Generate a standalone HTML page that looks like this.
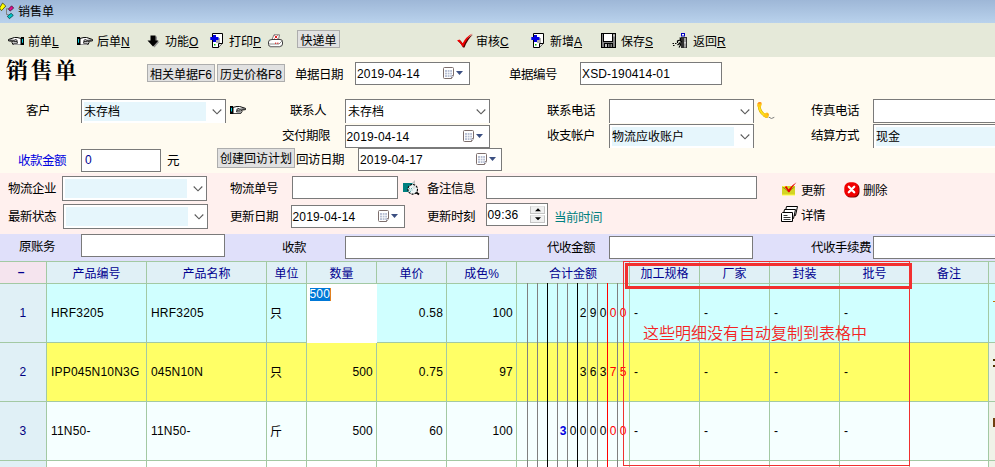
<!DOCTYPE html>
<html lang="zh-CN">
<head>
<meta charset="utf-8">
<title>销售单</title>
<style>
html,body{margin:0;padding:0;}
body{width:995px;height:467px;overflow:hidden;position:relative;background:#fffbf0;
 font-family:"Liberation Sans","Noto Sans CJK SC",sans-serif;font-size:12px;color:#000;}
.a{position:absolute;white-space:nowrap;line-height:14px;}
.lb{position:absolute;white-space:nowrap;line-height:14px;font-size:12.5px;letter-spacing:-0.5px;margin-top:1px;}
.in{position:absolute;box-sizing:border-box;border:1px solid #7a7a7a;background:#fff;font-size:12px;line-height:14px;white-space:nowrap;overflow:hidden;}
.in span.t{position:absolute;left:1px;top:4px;letter-spacing:0.15px;}
.cb{position:absolute;box-sizing:border-box;border:1px solid #7a7a7a;border-bottom:none;background:#fff;font-size:12px;}
.cb .f{position:absolute;left:2px;top:2px;bottom:2px;right:19px;background:#e6f6fc;}
.cb .t{position:absolute;left:2px;top:5px;line-height:14px;white-space:nowrap;}
.cb svg{position:absolute;right:5px;top:9px;}
.btn{position:absolute;box-sizing:border-box;border:1px solid #adadad;background:#e1e1e1;font-size:12px;padding-top:3px;line-height:14px !important;text-align:center;white-space:nowrap;}
.bar{position:absolute;left:0;width:995px;}
u{text-decoration:underline;}
.hd{position:absolute;top:264px;height:21px;line-height:21px;text-align:center;color:#000090;font-size:12px;white-space:nowrap;}
.vl{position:absolute;top:261px;width:1px;height:206px;background:#a3c9a3;}
.hl{position:absolute;height:1px;background:#a3c9a3;}
.c{position:absolute;line-height:14px;font-size:12px;white-space:nowrap;letter-spacing:0.2px;}
.r{text-align:right;}
.lg{position:absolute;top:283px;width:1px;height:184px;}
.dg{position:absolute;width:10px;text-align:center;font-size:12px;line-height:14px;}
</style>
</head>
<body>
<!-- backgrounds -->
<div class="bar" id="title" style="top:0;height:23px;background:linear-gradient(180deg,#9eb7d7,#b9d2ec);"></div>
<div class="bar" id="tool" style="top:23px;height:34px;background:#e5e9d9;"></div>
<div class="bar" style="top:57px;height:116px;background:#fffbf0;"></div>
<div class="bar" style="top:173px;height:61px;background:#fff0ee;"></div>
<div class="bar" style="top:234px;height:27px;background:#e0e0fa;"></div>

<!-- title bar -->
<svg class="a" style="left:0;top:0" width="17" height="21" viewBox="0 0 17 21"><path d="M6.500 8.500 V14.500 H8.500 M6.500 8.800 H8.500" stroke="#808080" fill="none"/><path d="M2.600 3 L5.800 6 L1.500 10.700 L-0.500 8 Z" fill="#ffff00" stroke="#303000" stroke-width=".7"/><path d="M11.600 5.800 L13.700 8.100 L10.100 11.100 L8.400 9 Z" fill="#e0108c" stroke="#300020" stroke-width=".7"/><path d="M11.100 13.300 L13.300 15.400 L9.400 18.700 L7.300 16.300 Z" fill="#00c8c8" stroke="#003030" stroke-width=".7"/></svg>
<div class="a" style="left:18px;top:5px;">销售单</div>

<!-- toolbar -->
<div class="a" style="left:28px;top:35px;">前单<u>L</u></div>
<div class="a" style="left:97px;top:35px;">后单<u>N</u></div>
<div class="a" style="left:165px;top:35px;">功能<u>O</u></div>
<div class="a" style="left:229px;top:35px;">打印<u>P</u></div>
<div class="btn" style="left:297px;top:30px;width:43px;height:18px;line-height:16px;">快递单</div>
<div class="a" style="left:476px;top:35px;">审核<u>C</u></div>
<div class="a" style="left:550px;top:35px;">新增<u>A</u></div>
<div class="a" style="left:621px;top:35px;">保存<u>S</u></div>
<div class="a" style="left:693px;top:35px;">返回<u>R</u></div>

<!-- heading row -->
<div class="a" style="left:6px;top:57px;font-family:'Liberation Serif','Noto Serif CJK SC',serif;font-weight:bold;font-size:22px;line-height:28px;letter-spacing:2.4px;">销售单</div>
<div class="btn" style="left:147px;top:64px;width:68px;height:18px;line-height:16px;">相关单据F6</div>
<div class="btn" style="left:217px;top:64px;width:68px;height:18px;line-height:16px;">历史价格F8</div>
<div class="lb" style="left:295px;top:67px;">单据日期</div>
<div class="in" style="left:355px;top:62px;width:115px;height:23px;"><span class="t">2019-04-14</span></div>
<div class="lb" style="left:509px;top:67px;">单据编号</div>
<div class="in" style="left:580px;top:62px;width:142px;height:23px;"><span class="t">XSD-190414-01</span></div>

<!-- row: customer -->
<div class="lb" style="left:26px;top:103px;">客户</div>
<div class="cb" style="left:81px;top:99px;width:145px;height:24px;"><div class="f"></div><span class="t">未存档</span></div>
<div class="lb" style="left:290px;top:103px;">联系人</div>
<div class="cb" style="left:345px;top:99px;width:145px;height:24px;"><span class="t">未存档</span></div>
<div class="lb" style="left:547px;top:103px;">联系电话</div>
<div class="cb" style="left:609px;top:99px;width:145px;height:24px;"></div>
<div class="lb" style="left:811px;top:103px;">传真电话</div>
<div class="in" style="left:873px;top:99px;width:140px;height:24px;"></div>

<div class="lb" style="left:282px;top:128px;">交付期限</div>
<div class="in" style="left:345px;top:125px;width:145px;height:23px;"><span class="t" style="left:.5px">2019-04-14</span></div>
<div class="lb" style="left:547px;top:128px;">收支帐户</div>
<div class="cb" style="left:609px;top:124px;width:145px;height:24px;"><div class="f"></div><span class="t">物流应收账户</span></div>
<div class="lb" style="left:811px;top:128px;">结算方式</div>
<div class="cb" style="left:873px;top:124px;width:145px;height:24px;"><div class="f"></div><span class="t">现金</span></div>

<div class="lb" style="left:18px;top:153px;color:#0000e0;">收款金额</div>
<div class="in" style="left:81px;top:149px;width:80px;height:23px;"><span class="t" style="color:#000090;left:3px;top:3px">0</span></div>
<div class="lb" style="left:167px;top:153px;">元</div>
<div class="btn" style="left:217px;top:148px;width:78px;height:20px;line-height:17px;">创建回访计划</div>
<div class="lb" style="left:296px;top:152px;">回访日期</div>
<div class="in" style="left:358px;top:148px;width:144px;height:23px;"><span class="t">2019-04-17</span></div>

<!-- pink area -->
<div class="lb" style="left:8px;top:181px;">物流企业</div>
<div class="cb" style="left:62px;top:176px;width:145px;height:25px;border-bottom:1px solid #7a7a7a;"><div class="f" style="bottom:2px"></div></div>
<div class="lb" style="left:230px;top:181px;">物流单号</div>
<div class="in" style="left:292px;top:176px;width:106px;height:23px;"></div>
<div class="lb" style="left:427px;top:181px;">备注信息</div>
<div class="in" style="left:486px;top:176px;width:271px;height:23px;"></div>
<div class="lb" style="left:801px;top:183px;">更新</div>
<div class="lb" style="left:863px;top:183px;">删除</div>

<div class="lb" style="left:8px;top:209px;">最新状态</div>
<div class="cb" style="left:63px;top:204px;width:145px;height:25px;border-bottom:1px solid #7a7a7a;"><div class="f" style="bottom:2px"></div></div>
<div class="lb" style="left:230px;top:209px;">更新日期</div>
<div class="in" style="left:291px;top:205px;width:114px;height:23px;"><span class="t" style="left:.5px">2019-04-14</span></div>
<div class="lb" style="left:427px;top:209px;">更新时刻</div>
<div class="in" style="left:486px;top:203px;width:62px;height:23px;"><span class="t" style="left:.5px">09:36</span></div>
<div class="lb" style="left:554px;top:210px;color:#008080;">当前时间</div>
<div class="lb" style="left:801px;top:208px;">详情</div>

<!-- lavender -->
<div class="lb" style="left:19px;top:239px;">原账务</div>
<div class="in" style="left:81px;top:234px;width:144px;height:23px;"></div>
<div class="lb" style="left:282px;top:240px;">收款</div>
<div class="in" style="left:345px;top:236px;width:144px;height:23px;"></div>
<div class="lb" style="left:547px;top:240px;">代收金额</div>
<div class="in" style="left:609px;top:236px;width:144px;height:23px;"></div>
<div class="lb" style="left:811px;top:240px;">代收手续费</div>
<div class="in" style="left:873px;top:236px;width:140px;height:23px;"></div>

<svg class="a" style="left:8px;top:36.700px" width="16" height="8.600" viewBox="0 0 16 9" preserveAspectRatio="none"><g transform="translate(16,0) scale(-1,1)"><rect x="0" y="0" width="3" height="9" fill="#000"/><rect x="1" y="2" width="1" height="4" fill="#00d0e0"/><path d="M3 1.5 L7 0.5 L9.5 0.5 L15.5 2.6 L15.5 4 L11.5 4.5 L12 6 L10.5 8.5 L3 8.5 Z" fill="#fff" stroke="#000" stroke-width="1"/><path d="M7.5 2.5 L10 3.5 L14.5 3.2 M7 4.6 L10.8 4.6 M7 6.5 L10.8 6.5 M7.2 3 L6.5 6.8" fill="none" stroke="#000" stroke-width=".9"/></g></svg>
<svg class="a" style="left:77px;top:36.700px" width="16" height="8.600" viewBox="0 0 16 9" preserveAspectRatio="none"><g><rect x="0" y="0" width="3" height="9" fill="#000"/><rect x="1" y="2" width="1" height="4" fill="#00d0e0"/><path d="M3 1.5 L7 0.5 L9.5 0.5 L15.5 2.6 L15.5 4 L11.5 4.5 L12 6 L10.5 8.5 L3 8.5 Z" fill="#fff" stroke="#000" stroke-width="1"/><path d="M7.5 2.5 L10 3.5 L14.5 3.2 M7 4.6 L10.8 4.6 M7 6.5 L10.8 6.5 M7.2 3 L6.5 6.8" fill="none" stroke="#000" stroke-width=".9"/></g></svg>
<svg class="a" style="left:147px;top:35px" width="13" height="13" viewBox="0 0 13 13"><path d="M5 1.5 H10 V6.5 H12.5 L7.5 12.5 L2.5 6.5 H5 Z" fill="#909090"/><path d="M3.5 0.5 H8.5 V5.5 H11.5 L6 11.5 L0.5 5.5 H3.5 Z" fill="#000"/></svg>
<svg class="a" style="left:210px;top:33px" width="14" height="15" viewBox="0 0 14 15"><path d="M2.5 0.5 H12.5 V10.5 L8.5 14.5 H2.5 Z" fill="#fff" stroke="#000" stroke-width="1"/><path d="M12.5 10.5 H8.5 V14.5" fill="#e0e0e0" stroke="#000" stroke-width="1"/><rect x="6" y="5" width="4" height="5" fill="#b0b0b0"/><path d="M3 2 H6 V4 H8.5 V7 H6 V9 H3 V7 H0.3 V4 H3 Z" fill="#0000e0"/><rect x="4" y="11" width="1.5" height="1.5" fill="#00c000"/></svg>
<svg class="a" style="left:531px;top:33px" width="14" height="15" viewBox="0 0 14 15"><path d="M2.5 0.5 H12.5 V10.5 L8.5 14.5 H2.5 Z" fill="#fff" stroke="#000" stroke-width="1"/><path d="M12.5 10.5 H8.5 V14.5" fill="#e0e0e0" stroke="#000" stroke-width="1"/><rect x="6" y="5" width="4" height="5" fill="#b0b0b0"/><path d="M3 2 H6 V4 H8.5 V7 H6 V9 H3 V7 H0.3 V4 H3 Z" fill="#0000e0"/><rect x="4" y="11" width="1.5" height="1.5" fill="#00c000"/></svg>
<svg class="a" style="left:267px;top:34px" width="17" height="14" viewBox="0 0 17 14"><path d="M5 5.5 L7 0.8 H12.5 L11.5 5.5 Z" fill="#fff" stroke="#606060" stroke-width=".8"/><path d="M7.5 1.5 L10.5 4.5 M10.5 1.5 L7.5 4.5" stroke="#e02020" stroke-width="1"/><path d="M1.5 8 Q1.5 5.5 5 5.5 H13 Q15.5 5.5 15.5 7.5 V10 Q15.500 12.5 12.5 12.5 H4 Q1.5 12.5 1.5 10.5 Z" fill="#fff" stroke="#404040" stroke-width="1"/><path d="M2 10 H12 L15 7" fill="none" stroke="#707070" stroke-width=".8"/><path d="M3 12.8 H13" stroke="#909090" stroke-width="1.2"/><rect x="8" y="8.6" width="1.2" height="1.2" fill="#e02020"/><rect x="10.2" y="8.6" width="1.2" height="1.2" fill="#e02020"/></svg>
<svg class="a" style="left:456px;top:33px" width="18" height="15" viewBox="0 0 18 15"><path d="M2 8 L4.5 7.5 L7.5 11.5 Q11 4.500 17 1.500 Q11.500 6.500 8.500 14.500 L7 14.500 Q5 10.500 2 8 Z" fill="#500000"/><path d="M1 7.500 L3.500 6.500 L6.500 10.500 Q10 3.500 16.500 0.500 Q10.500 5.500 7.500 13.500 L6.500 13.500 Q4.500 9.500 1 7.500 Z" fill="#f00000"/></svg>
<svg class="a" style="left:601px;top:33px" width="15" height="15" viewBox="0 0 15 15"><rect x="0.500" y="0.500" width="14" height="14" fill="#808080" stroke="#000"/><rect x="2.500" y="0.500" width="9" height="8" fill="#fff" stroke="#000"/><rect x="12.500" y="1.500" width="1" height="2" fill="#fff"/><rect x="3" y="10" width="9" height="4.500" fill="#000"/><rect x="4" y="11" width="2" height="3" fill="#c0c0c0"/><rect x="7" y="11" width="1.500" height="3" fill="#808080"/><rect x="9.500" y="11" width="1.500" height="3" fill="#808080"/></svg>
<svg class="a" style="left:672px;top:33px" width="16" height="15" viewBox="0 0 16 15"><rect x="9.500" y="0.500" width="3" height="2.500" fill="#fff" stroke="#0000c0" stroke-width="1"/><rect x="9" y="4" width="6" height="11" fill="#303030"/><rect x="12" y="5" width="2" height="9.500" fill="#a0a0a0"/><rect x="12.500" y="9" width="1" height="1.500" fill="#fff"/><path d="M7.500 5 L8.500 5 L8.500 8 L10 9 M8 7 L5.500 8 L5.500 10 M8 9 L8.500 12 L7 14.500 M8 10 L5.500 12" stroke="#000" stroke-width="1.2" fill="none"/><path d="M0.500 10.500 H2 M3 10.500 H4.500 M1 12.500 H2.500" stroke="#000" stroke-width="1"/></svg>
<svg class="a" style="left:230px;top:105.700px" width="16" height="8.200" viewBox="0 0 16 9" preserveAspectRatio="none"><g><rect x="0" y="0" width="3" height="9" fill="#000"/><rect x="1" y="2" width="1" height="4" fill="#00d0e0"/><path d="M3 1.5 L7 0.5 L9.5 0.5 L15.5 2.6 L15.5 4 L11.5 4.5 L12 6 L10.5 8.5 L3 8.5 Z" fill="#fff" stroke="#000" stroke-width="1"/><path d="M7.5 2.5 L10 3.5 L14.5 3.2 M7 4.6 L10.8 4.6 M7 6.5 L10.8 6.5 M7.2 3 L6.5 6.8" fill="none" stroke="#000" stroke-width=".9"/></g></svg>
<svg class="a" style="left:212px;top:109px" width="10" height="6" viewBox="0 0 10 6"><path d="M0.7 0.5 L5 4.8 L9.3 0.5" fill="none" stroke="#5a5a5a" stroke-width="1.1"/></svg>
<svg class="a" style="left:476px;top:109px" width="10" height="6" viewBox="0 0 10 6"><path d="M0.7 0.5 L5 4.8 L9.3 0.5" fill="none" stroke="#5a5a5a" stroke-width="1.1"/></svg>
<svg class="a" style="left:740px;top:109px" width="10" height="6" viewBox="0 0 10 6"><path d="M0.7 0.5 L5 4.8 L9.3 0.5" fill="none" stroke="#5a5a5a" stroke-width="1.1"/></svg>
<svg class="a" style="left:740px;top:134px" width="10" height="6" viewBox="0 0 10 6"><path d="M0.7 0.5 L5 4.8 L9.3 0.5" fill="none" stroke="#5a5a5a" stroke-width="1.1"/></svg>
<svg class="a" style="left:193px;top:186px" width="10" height="6" viewBox="0 0 10 6"><path d="M0.7 0.5 L5 4.8 L9.3 0.5" fill="none" stroke="#5a5a5a" stroke-width="1.1"/></svg>
<svg class="a" style="left:194px;top:214px" width="10" height="6" viewBox="0 0 10 6"><path d="M0.7 0.5 L5 4.8 L9.3 0.5" fill="none" stroke="#5a5a5a" stroke-width="1.1"/></svg>
<svg class="a" style="left:443px;top:67px" width="21" height="13" viewBox="0 0 21 13"><path d="M1.5 0.5 H9.5 Q10.5 0.5 10.5 1.5 V8.5 L8.5 11.5 H1.5 Q0.5 11.5 0.5 10.5 V1.5 Q0.5 0.5 1.5 0.5 Z" fill="#fff" stroke="#7d6e6c" stroke-width="1"/><path d="M10.5 8.5 H8.5 V11.5" fill="#d8dce8" stroke="#7d6e6c" stroke-width=".8"/><rect x="2" y="3" width="7" height="7" fill="#b8c0d4"/><path d="M4.5 3 V10 M6.8 3 V10 M2 5.4 H9 M2 7.7 H9" stroke="#fff" stroke-width=".7"/><path d="M13 4 H20 L16.5 8 Z" fill="#3b4f81"/></svg>
<svg class="a" style="left:463px;top:130px" width="21" height="13" viewBox="0 0 21 13"><path d="M1.5 0.5 H9.5 Q10.5 0.5 10.5 1.5 V8.5 L8.5 11.5 H1.5 Q0.5 11.5 0.5 10.5 V1.5 Q0.5 0.5 1.5 0.5 Z" fill="#fff" stroke="#7d6e6c" stroke-width="1"/><path d="M10.5 8.5 H8.5 V11.5" fill="#d8dce8" stroke="#7d6e6c" stroke-width=".8"/><rect x="2" y="3" width="7" height="7" fill="#b8c0d4"/><path d="M4.5 3 V10 M6.8 3 V10 M2 5.4 H9 M2 7.7 H9" stroke="#fff" stroke-width=".7"/><path d="M13 4 H20 L16.5 8 Z" fill="#3b4f81"/></svg>
<svg class="a" style="left:476px;top:153px" width="21" height="13" viewBox="0 0 21 13"><path d="M1.5 0.5 H9.5 Q10.5 0.5 10.5 1.5 V8.5 L8.5 11.5 H1.5 Q0.5 11.5 0.5 10.5 V1.5 Q0.5 0.5 1.5 0.5 Z" fill="#fff" stroke="#7d6e6c" stroke-width="1"/><path d="M10.5 8.5 H8.5 V11.5" fill="#d8dce8" stroke="#7d6e6c" stroke-width=".8"/><rect x="2" y="3" width="7" height="7" fill="#b8c0d4"/><path d="M4.5 3 V10 M6.8 3 V10 M2 5.4 H9 M2 7.7 H9" stroke="#fff" stroke-width=".7"/><path d="M13 4 H20 L16.5 8 Z" fill="#3b4f81"/></svg>
<svg class="a" style="left:378px;top:210px" width="21" height="13" viewBox="0 0 21 13"><path d="M1.5 0.5 H9.5 Q10.5 0.5 10.5 1.5 V8.5 L8.5 11.5 H1.5 Q0.5 11.5 0.5 10.5 V1.5 Q0.5 0.5 1.5 0.5 Z" fill="#fff" stroke="#7d6e6c" stroke-width="1"/><path d="M10.5 8.5 H8.5 V11.5" fill="#d8dce8" stroke="#7d6e6c" stroke-width=".8"/><rect x="2" y="3" width="7" height="7" fill="#b8c0d4"/><path d="M4.5 3 V10 M6.8 3 V10 M2 5.4 H9 M2 7.7 H9" stroke="#fff" stroke-width=".7"/><path d="M13 4 H20 L16.5 8 Z" fill="#3b4f81"/></svg>
<div class="a" style="left:530px;top:205.500px;width:15px;height:8px;background:#f0f0f0;border:1px solid #c4c4c4;border-top-color:#e4e4e4;box-sizing:border-box;"></div><div class="a" style="left:530px;top:215px;width:15px;height:8px;background:#f0f0f0;border:1px solid #c4c4c4;border-top-color:#e4e4e4;box-sizing:border-box;"></div><svg class="a" style="left:534.500px;top:208px" width="6" height="13" viewBox="0 0 6 13"><path d="M0 3.300 L3 0.300 L6 3.300 Z M0 9.200 L3 12.200 L6 9.200 Z" fill="#000"/></svg>
<svg class="a" style="left:756px;top:100px" width="20" height="21" viewBox="0 0 20 21"><path d="M12.500 17 Q15.500 19.800 18.300 17.300" stroke="#707070" stroke-width=".9" fill="none"/><path d="M3.200 5.500 Q3.200 12.500 10.500 16.500" stroke="#d8a800" stroke-width="3" fill="none" stroke-linecap="round"/><path d="M3.200 5.500 Q3.200 12.500 10.500 16.500" stroke="#ffe41c" stroke-width="1.900" fill="none" stroke-linecap="round"/><path d="M1.300 5.500 Q0.800 2.500 3.500 2 Q5.800 1.800 5.800 4.200 L4.800 7 L1.800 7 Z" fill="#ffc814"/><path d="M1.500 4 Q2 2 4 2 Q5.600 2 5.600 3.500 Z" fill="#ff8c28"/><path d="M8.500 13.500 L11 12.600 Q13.500 13.500 12.800 15.800 Q12 18 9.500 17.600 L7.800 16 Z" fill="#ffc814"/><path d="M11 13 Q13 13.800 12.600 15.600 L11.200 15 Z" fill="#ff9c28"/></svg>
<svg class="a" style="left:402px;top:179px" width="18" height="17" viewBox="0 0 18 17"><path d="M10 4 L13 1 V5 Z" fill="#c0c0c0"/><rect x="1" y="4" width="9.500" height="9" fill="#008080"/><circle cx="10.700" cy="10.300" r="4.800" fill="#eef6f6" stroke="#000" stroke-width="1.100" stroke-dasharray="2.200 1"/><path d="M7 9.500 H10 M7.500 11 H10.500 M8 12.500 H10" stroke="#40a0a0" stroke-width=".8" stroke-dasharray="1 1"/><path d="M10.500 8 L12.500 10 M11.500 7 L13.500 9" stroke="#c0c0c0" stroke-width=".7"/><path d="M14.300 13.500 L17 15.500" stroke="#000" stroke-width="1.800"/></svg>
<svg class="a" style="left:781px;top:182px" width="16" height="14" viewBox="0 0 16 14"><rect x="1" y="4" width="13" height="9" fill="#d4d424"/><path d="M1 4.500 H6 M1 13 H14" stroke="#ffff40" stroke-width="1"/><path d="M1.500 5 L7.500 9.500 L13.500 5" fill="none" stroke="#909010" stroke-width=".9"/><path d="M3.500 5 L5.500 4 L7.500 7.500 Q11 3 15.500 0.300 Q11 5 8.500 10.300 L7.300 10.300 Q6 7 3.500 5 Z" fill="#e80000"/></svg>
<svg class="a" style="left:844px;top:182px" width="16" height="16" viewBox="0 0 16 16"><rect x="1.200" y="1.200" width="14.300" height="14.300" rx="5.500" fill="#700000"/><rect x="0.300" y="0.300" width="14.400" height="14.400" rx="5.500" fill="#f00000"/><path d="M4.800 4.800 L10.200 10.200 M10.200 4.800 L4.800 10.200" stroke="#fff" stroke-width="2.300" stroke-linecap="round"/></svg>
<svg class="a" style="left:781px;top:206px" width="17" height="16" viewBox="0 0 17 16"><path d="M5.500 0.500 H16.500 L14.500 9.500 H3.500 Z" fill="#fff" stroke="#000" stroke-width="1"/><path d="M3.500 3.500 H14.500 L12.500 12.500 H1.500 Z" fill="#fff" stroke="#000" stroke-width="1"/><path d="M1.500 6.500 H11.500 V15.500 H0.500 V7.500 Z" fill="#fff" stroke="#000" stroke-width="1"/><path d="M2.500 9.500 H6.500 M2.500 11.500 H9.500 M2.500 13.500 H9.500" stroke="#000" stroke-width=".8"/></svg>
<!-- table -->
<div id="tbl">
<div class="a" style="left:0;top:261px;width:995px;height:22px;background:#e0f0f6;"></div>
<div class="a" style="left:0;top:261px;width:46px;height:22px;background:#f5e4ee;"></div>
<div class="a" style="left:0;top:283px;width:46px;height:184px;background:#e0f0f6;"></div>
<div class="a" style="left:47px;top:284px;width:948px;height:58px;background:#d0ffff;"></div>
<div class="a" style="left:47px;top:343px;width:942px;height:58px;background:#ffff66;"></div>

<div class="a" style="left:47px;top:402px;width:948px;height:58px;background:#f5ffff;"></div>
<div class="a" style="left:47px;top:461px;width:948px;height:6px;background:#ffffff;"></div>
<div class="a" style="left:989px;top:343px;width:6px;height:124px;background:#f0f2e8;"></div><div class="a" style="left:993px;top:301px;width:2px;height:1px;background:#c07000;"></div><div class="a" style="left:993px;top:359px;width:2px;height:2px;background:#503000;"></div><div class="a" style="left:993px;top:365px;width:2px;height:2px;background:#503000;"></div><div class="a" style="left:993px;top:418px;width:2px;height:9px;background:#704010;"></div>

<div class="hl" style="left:0px;top:261px;width:995px;"></div>
<div class="hl" style="left:0px;top:283px;width:995px;"></div>
<div class="hl" style="left:0px;top:342px;width:995px;"></div>
<div class="hl" style="left:0px;top:401px;width:995px;"></div>
<div class="hl" style="left:0px;top:460px;width:995px;"></div>
<div class="vl" style="left:46px;"></div>
<div class="vl" style="left:146px;"></div>
<div class="vl" style="left:266px;"></div>
<div class="vl" style="left:306px;"></div>
<div class="vl" style="left:376px;"></div>
<div class="vl" style="left:446px;"></div>
<div class="vl" style="left:516px;"></div>
<div class="vl" style="left:629px;"></div>
<div class="vl" style="left:699px;"></div>
<div class="vl" style="left:769px;"></div>
<div class="vl" style="left:839px;"></div>
<div class="vl" style="left:909px;"></div>
<div class="vl" style="left:988px;"></div>
<div class="hd" style="left:-2px;width:46px;top:262px;font-weight:bold;">–</div>
<div class="hd" style="left:47px;width:99px;">产品编号</div>
<div class="hd" style="left:147px;width:119px;">产品名称</div>
<div class="hd" style="left:267px;width:39px;">单位</div>
<div class="hd" style="left:307px;width:69px;">数量</div>
<div class="hd" style="left:377px;width:69px;">单价</div>
<div class="hd" style="left:447px;width:69px;">成色%</div>
<div class="hd" style="left:517px;width:112px;">合计金额</div>
<div class="hd" style="left:630px;width:69px;">加工规格</div>
<div class="hd" style="left:700px;width:69px;">厂家</div>
<div class="hd" style="left:770px;width:69px;">封装</div>
<div class="hd" style="left:840px;width:69px;">批号</div>
<div class="hd" style="left:910px;width:78px;">备注</div>
<div class="lg" style="left:527px;background:#808080;"></div>
<div class="lg" style="left:537px;background:#808080;"></div>
<div class="lg" style="left:547px;background:#000;"></div>
<div class="lg" style="left:557px;background:#808080;"></div>
<div class="lg" style="left:567px;background:#808080;"></div>
<div class="lg" style="left:577px;background:#000;"></div>
<div class="lg" style="left:587px;background:#808080;"></div>
<div class="lg" style="left:597px;background:#808080;"></div>
<div class="lg" style="left:607px;background:#f00;"></div>
<div class="lg" style="left:617px;background:#808080;"></div>
<div class="c" style="left:0;width:46px;text-align:center;top:306px;color:#000080;">1</div>
<div class="c" style="left:51px;top:306px;">HRF3205</div>
<div class="c" style="left:151px;top:306px;">HRF3205</div>
<div class="c" style="left:270px;top:307px;">只</div>
<div class="c r" style="left:377px;width:66px;top:306px;">0.58</div>
<div class="c r" style="left:447px;width:66px;top:306px;">100</div>
<div class="dg" style="left:578px;top:306px;color:#000;">2</div>
<div class="dg" style="left:588px;top:306px;color:#000;">9</div>
<div class="dg" style="left:598px;top:306px;color:#000;">0</div>
<div class="dg" style="left:608px;top:306px;color:#f00;">0</div>
<div class="dg" style="left:618px;top:306px;color:#f00;">0</div>
<div class="c" style="left:634px;top:306px;">-</div>
<div class="c" style="left:704px;top:306px;">-</div>
<div class="c" style="left:774px;top:306px;">-</div>
<div class="c" style="left:844px;top:306px;">-</div>
<div class="c" style="left:0;width:46px;text-align:center;top:365px;color:#000080;">2</div>
<div class="c" style="left:51px;top:365px;">IPP045N10N3G</div>
<div class="c" style="left:151px;top:365px;">045N10N</div>
<div class="c" style="left:270px;top:366px;">只</div>
<div class="c r" style="left:307px;width:66px;top:365px;">500</div>
<div class="c r" style="left:377px;width:66px;top:365px;">0.75</div>
<div class="c r" style="left:447px;width:66px;top:365px;">97</div>
<div class="dg" style="left:578px;top:365px;color:#000;">3</div>
<div class="dg" style="left:588px;top:365px;color:#000;">6</div>
<div class="dg" style="left:598px;top:365px;color:#000;">3</div>
<div class="dg" style="left:608px;top:365px;color:#f00;">7</div>
<div class="dg" style="left:618px;top:365px;color:#f00;">5</div>
<div class="c" style="left:634px;top:365px;">-</div>
<div class="c" style="left:704px;top:365px;">-</div>
<div class="c" style="left:774px;top:365px;">-</div>
<div class="c" style="left:844px;top:365px;">-</div>
<div class="c" style="left:0;width:46px;text-align:center;top:424px;color:#000080;">3</div>
<div class="c" style="left:51px;top:424px;">11N50-</div>
<div class="c" style="left:151px;top:424px;">11N50-</div>
<div class="c" style="left:270px;top:425px;">斤</div>
<div class="c r" style="left:307px;width:66px;top:424px;">500</div>
<div class="c r" style="left:377px;width:66px;top:424px;">60</div>
<div class="c r" style="left:447px;width:66px;top:424px;">100</div>
<div class="dg" style="left:558px;top:424px;color:#0000e0;font-weight:bold;">3</div>
<div class="dg" style="left:568px;top:424px;color:#000;">0</div>
<div class="dg" style="left:578px;top:424px;color:#000;">0</div>
<div class="dg" style="left:588px;top:424px;color:#000;">0</div>
<div class="dg" style="left:598px;top:424px;color:#000;">0</div>
<div class="dg" style="left:608px;top:424px;color:#f00;">0</div>
<div class="dg" style="left:618px;top:424px;color:#f00;">0</div>
<div class="c" style="left:634px;top:424px;">-</div>
<div class="c" style="left:704px;top:424px;">-</div>
<div class="c" style="left:774px;top:424px;">-</div>
<div class="c" style="left:844px;top:424px;">-</div>
<div class="a" style="left:307px;top:284px;width:70px;height:59px;background:#fff;"></div><div class="c" style="left:309.5px;top:288px;height:13px;line-height:13px;background:#0078d7;color:#fff;padding:0 0px;">500</div>
<div class="a" style="left:330px;top:288px;width:1px;height:13px;background:#e08020;"></div>
<div class="a" style="left:623px;top:261px;width:285px;height:203px;border:1px solid #f03030;box-sizing:content-box;"></div>
<div class="a" style="left:625px;top:263px;width:281px;height:20px;border:3px solid #f23030;"></div>
<div class="a" style="left:643px;top:325px;color:#f42424;font-size:16px;line-height:18px;font-weight:350;">这些明细没有自动复制到表格中</div>
</div>
</body>
</html>
